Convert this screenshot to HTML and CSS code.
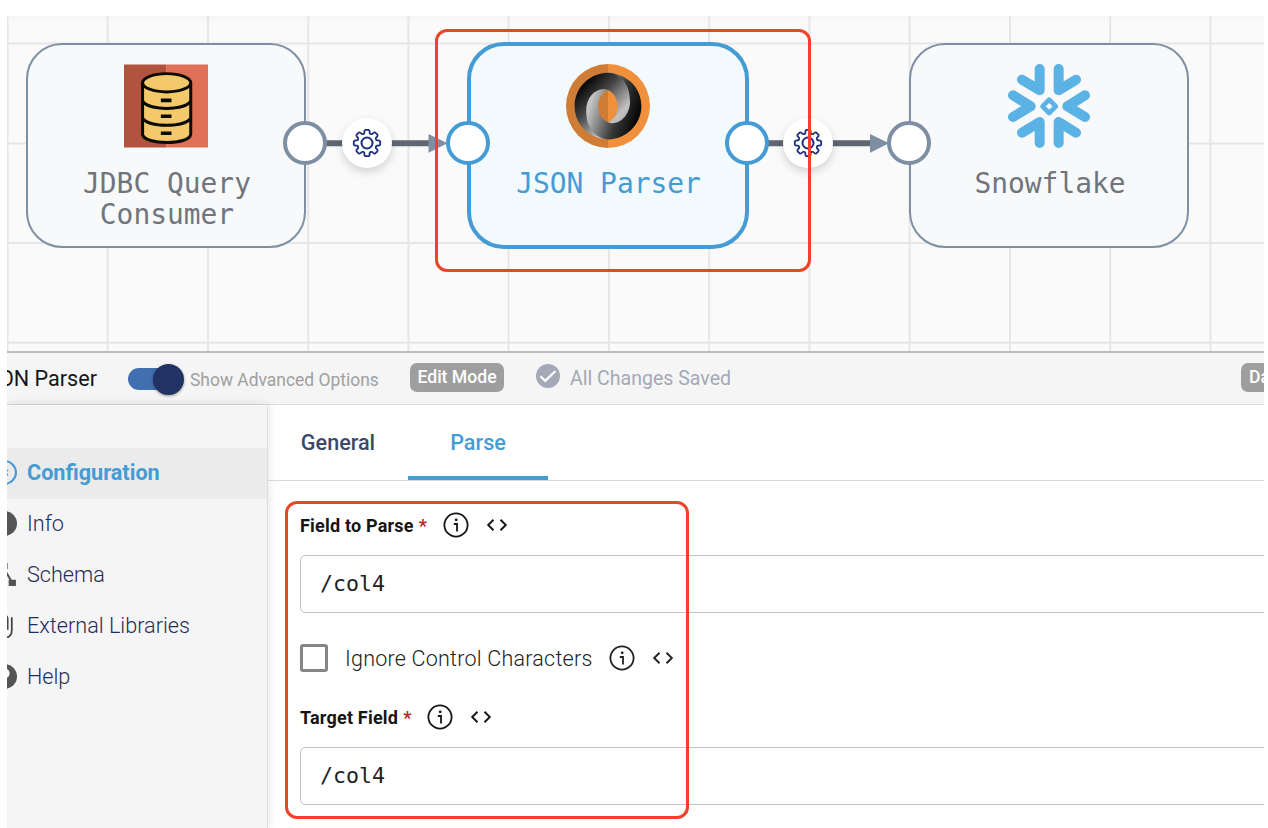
FILE: index.html
```html
<!DOCTYPE html>
<html lang="en">
<head>
<meta charset="utf-8">
<title>Pipeline - JSON Parser</title>
<link rel="stylesheet" href="styles.css">
</head>
<body>
<svg class="defs" width="0" height="0">
  <symbol id="gear" viewBox="-15 -15 30 30">
    <path d="M10.07-2.6 Q12.9-2.9 13.2-1.5 L13.2 1.5 Q12.9 2.9 10.07 2.6 A2 2 0 0 0 8.96 5.28 Q11.2 7.1 10.4 8.3 L8.3 10.4 Q7.1 11.2 5.28 8.96 A2 2 0 0 0 2.6 10.07 Q2.9 12.9 1.5 13.2 L-1.5 13.2 Q-2.9 12.9 -2.6 10.07 A2 2 0 0 0 -5.28 8.96 Q-7.1 11.2 -8.3 10.4 L-10.4 8.3 Q-11.2 7.1 -8.96 5.28 A2 2 0 0 0 -10.07 2.6 Q-12.9 2.9 -13.2 1.5 L-13.2-1.5 Q-12.9-2.9 -10.07-2.6 A2 2 0 0 0 -8.96-5.28 Q-11.2-7.1 -10.4-8.3 L-8.3-10.4 Q-7.1-11.2 -5.28-8.96 A2 2 0 0 0 -2.6-10.07 Q-2.9-12.9 -1.5-13.2 L1.5-13.2 Q2.9-12.9 2.6-10.07 A2 2 0 0 0 5.28-8.96 Q7.1-11.2 8.3-10.4 L10.4-8.3 Q11.2-7.1 8.96-5.28 A2 2 0 0 0 10.07-2.6Z" fill="none" stroke="currentColor" stroke-width="1.8" stroke-linejoin="round"/>
    <circle r="5.5" fill="none" stroke="currentColor" stroke-width="2"/>
  </symbol>
  <symbol id="info" viewBox="0 0 26 26">
    <circle cx="13" cy="13" r="11.6" fill="none" stroke="currentColor" stroke-width="1.8"/>
    <circle cx="13.2" cy="7.8" r="1.4" fill="currentColor"/>
    <path d="M10.8 12H14V19.5" fill="none" stroke="currentColor" stroke-width="1.8"/>
  </symbol>
  <symbol id="code" viewBox="0 0 22 14">
    <path d="M7.5 1.8 2.2 7l5.3 5.2M14.5 1.8 19.8 7l-5.3 5.2" fill="none" stroke="currentColor" stroke-width="1.9"/>
  </symbol>
</svg>
<div class="app">
  <section class="canvas">
    <svg class="wires" width="1257" height="336" viewBox="7 16 1257 336">
      <g stroke="#e6e6e6" stroke-width="2">
        <path d="M7.5 16V352M107.7 16V352M208 16V352M308.2 16V352M408.4 16V352M508.6 16V352M609 16V352M709.2 16V352M809.4 16V352M909.6 16V352M1010 16V352M1110.2 16V352M1210.5 16V352"/>
        <path d="M7 43.6H1264M7 143.4H1264M7 243H1264M7 342.7H1264"/>
      </g>
      <path d="M326 143.3H430M766 143.3H872" stroke="#5f6772" stroke-width="6"/>
      <path d="M428.5 134l19 9.3-19 9.5zM870 134l19 9.3-19 9.5z" fill="#7f8fa3"/>
    </svg>

    <div class="node node-jdbc">
      <svg class="logo" viewBox="373 191 253 250">
        <path fill="#b1533f" d="M373 191h127v250H373z"/><path fill="#de7056" d="M500 191h126v250H500z"/>
        <path d="M429 246V402C434 434 570 434 574 402V246" fill="#f4c96b" stroke="#0c0a05" stroke-width="9"/>
        <ellipse cx="501.500" cy="246" rx="72.500" ry="27.500" fill="#f4c96b" stroke="#0c0a05" stroke-width="9"/>
        <path d="M430 303C450 330 553 330 573 303M430 354C450 381 553 381 573 354" fill="none" stroke="#0c0a05" stroke-width="9"/>
        <path d="M484 299h32M484 347h32M484 398h32" stroke="#0c0a05" stroke-width="11"/>
      </svg>
      <div class="node-name">JDBC Query<br>Consumer</div>
    </div>
    <div class="node node-json">
      <svg class="logo" viewBox="0 0 84 84">
        <defs>
          <linearGradient id="j1" x1=".2" y1=".15" x2=".6" y2="1"><stop offset="0" stop-color="#111"/><stop offset=".1" stop-color="#1c1c1c"/><stop offset=".5" stop-color="#777"/><stop offset="1" stop-color="#ccc"/></linearGradient>
          <linearGradient id="j2" x1=".9" y1=".7" x2=".1" y2=".4"><stop offset="0" stop-color="#0a0a0a"/><stop offset=".4" stop-color="#383838"/><stop offset="1" stop-color="#c4c4c4"/></linearGradient>
          <linearGradient id="j3" x1=".2" y1=".1" x2=".85" y2=".75"><stop offset="0" stop-color="#050505"/><stop offset=".35" stop-color="#444"/><stop offset=".8" stop-color="#c2c2c2"/><stop offset="1" stop-color="#aaa"/></linearGradient>
        </defs>
        <path d="M42 0A42 42 0 0 0 42 84z" fill="#cf7c37"/><path d="M42 0A42 42 0 0 1 42 84z" fill="#f0903d"/>
        <g transform="translate(8.600 8.600) scale(.4175)">
          <path fill="url(#j3)" d="M79.865 119.1c35.398 48.255 70.04-13.469 69.989-50.587C149.793 24.627 105.312.1 79.836.1 38.943.1 0 33.895 0 80.135 0 131.531 44.64 160 79.836 160c-7.965-1.147-34.506-6.834-34.863-67.967-.24-41.346 13.488-57.866 34.805-50.6.477.177 23.514 9.265 23.514 38.95 0 29.56-23.427 38.716-23.427 38.716z"/>
          <path fill="url(#j2)" d="M79.823 41.4C56.433 33.34 27.78 52.618 27.78 91.23c0 63.048 46.721 68.77 52.384 68.77C121.057 160 160 126.204 160 79.964 160 28.568 115.36.1 80.164.1c9.748-1.35 52.541 10.55 52.541 69.037 0 38.141-31.953 58.905-52.735 50.033-.477-.178-23.514-9.265-23.514-38.95 0-29.56 23.367-38.82 23.367-38.82z"/>
        </g>
      </svg>
      <div class="node-name">JSON Parser</div>
    </div>
    <div class="node node-snow">
      <svg class="logo" viewBox="441 190 252 252">
        <g fill="none" stroke="#5bb2e4" stroke-width="30" stroke-linecap="round" stroke-linejoin="round">
          <path d="M539 205V269L486 237M596 205V269L648 237M539 427V364L486 396M596 427V364L648 396M459 284L512 317L459 349M675 284L622 317L675 349"/>
        </g>
        <path d="M567.500 297l20 20-20 20-20-20z" fill="none" stroke="#5bb2e4" stroke-width="14" stroke-linejoin="round"/>
      </svg>
      <div class="node-name">Snowflake</div>
    </div>

    <i class="port port-1"></i><i class="port port-2 active"></i><i class="port port-3 active"></i><i class="port port-4"></i>
    <span class="gear gear-1"><svg><use href="#gear"/></svg></span>
    <span class="gear gear-2"><svg><use href="#gear"/></svg></span>
    <div class="mark mark-node"></div>
  </section>

  <header class="bar">
    <div class="title"><span>JSON Parser</span></div>
    <span class="toggle"><i></i></span>
    <span class="toggle-label">Show Advanced Options</span>
    <span class="badge">Edit Mode</span>
    <svg class="saved-icon" viewBox="0 0 24 24"><circle cx="12" cy="12" r="12" fill="#a4a9b7"/><path d="M4.500 12.200l4.700 4.700L19.500 7" fill="none" stroke="#fff" stroke-width="2.200"/></svg>
    <span class="saved">All Changes Saved</span>
    <span class="badge badge-data">Data</span>
  </header>

  <div class="body">
    <nav class="side">
      <a class="item current"><svg viewBox="0 0 24 24" fill="none" stroke="currentColor" stroke-width="2"><circle cx="12" cy="12" r="11"/><path d="M12 10h3.500M12 14h3.500M8 8v8"/></svg><span>Configuration</span></a>
      <a class="item"><svg viewBox="0 0 24 24"><circle cx="12" cy="12" r="12" fill="#555"/><path d="M12 10v8M12 6v2" stroke="#fff" stroke-width="2"/></svg><span>Info</span></a>
      <a class="item"><svg viewBox="0 0 24 24" fill="#555"><path d="M16 17h7v6h-7zM1 17h7v6H1zM8 1h7v6H8z"/><path d="M13 9l6 10" stroke="#555" stroke-width="2"/></svg><span>Schema</span></a>
      <a class="item"><svg viewBox="0 0 24 24" fill="none" stroke="#444" stroke-width="1.700"><path d="M19 4V17a5.500 6.500 0 0 1-11 0V5a3.600 4 0 0 1 7 0V16"/></svg><span>External Libraries</span></a>
      <a class="item"><svg viewBox="0 0 24 24"><circle cx="12" cy="12" r="12" fill="#555"/><path d="M8.500 9a3.600 3.600 0 1 1 5.800 2.800Q12 13.500 12 15.500M12 17.500v2" fill="none" stroke="#fff" stroke-width="2.400"/></svg><span>Help</span></a>
    </nav>
    <main class="main">
      <div class="tabs"><a class="tab"><span>General</span></a><a class="tab selected"><span>Parse</span></a></div>
      <div class="form">
        <div class="label"><b>Field to Parse</b><em>*</em><svg class="i"><use href="#info"/></svg><svg class="c"><use href="#code"/></svg></div>
        <div class="input">/col4</div>
        <div class="check"><i class="box"></i><span>Ignore Control Characters</span><svg class="i"><use href="#info"/></svg><svg class="c"><use href="#code"/></svg></div>
        <div class="label target"><b>Target Field</b><em>*</em><svg class="i"><use href="#info"/></svg><svg class="c"><use href="#code"/></svg></div>
        <div class="input">/col4</div>
        <div class="mark mark-form"></div>
      </div>
    </main>
  </div>
</div>
</body>
</html>
```
FILE: styles.css
```css
* { box-sizing: border-box; }
body { margin: 0; background: #fff; font-family: Roboto, sans-serif; overflow: hidden; }
.defs { position: absolute; }
.app { width: 1257px; height: 812px; margin: 16px 0 0 7px; overflow: hidden; display: flex; flex-direction: column; }

.canvas { position: relative; height: 335px; flex: none; background: #fafafa; overflow: hidden; }
.canvas::before { content: ""; position: absolute; inset: 0 0 auto; height: 8px; background: linear-gradient(#f5f5f5, transparent); }
.wires { position: absolute; left: 0; top: 0; }
.node { position: absolute; top: 27px; width: 280px; height: 205px; border: 2px solid #8090a4; border-radius: 36px; background: #f7f9fb; display: flex; flex-direction: column; align-items: center; padding-top: 18.500px; color: #70757b; }
.node-jdbc { left: 19px; }
.node-json { left: 460px; top: 26px; width: 282px; height: 207px; border: 4px solid #459bd3; background: #f2fafe; color: #459bd3; padding-top: 17.500px; border-radius: 37px; }
.node-snow { left: 902px; }
.logo { width: 84px; height: 84px; flex: none; margin-right: 1px; }
.node-name { margin: 20px 0 0 2px; font: 27.9px/31px "DejaVu Sans Mono", monospace; text-align: center; white-space: nowrap; }
.node-json .node-name { margin-left: 1px; }
.port { position: absolute; top: 105px; width: 44px; height: 44px; border: 4px solid #7f8fa3; border-radius: 50%; background: #fff; }
.port.active { border-color: #459bd3; }
.port-1 { left: 276px; }
.port-2 { left: 439px; }
.port-3 { left: 717.500px; }
.port-4 { left: 880px; }
.gear { position: absolute; top: 102px; width: 50px; height: 50px; border-radius: 50%; background: #fff; box-shadow: 0 4px 10px rgba(0,0,0,.16); color: #1c307c; display: grid; place-items: center; }
.gear svg { width: 30px; height: 30px; margin: -1px 0 0 -1px; }
.gear-1 { left: 335px; }
.gear-2 { left: 776px; }
.mark { position: absolute; border: 3px solid #ee4328; border-radius: 12px; }
.mark-node { left: 428px; top: 13px; width: 376px; height: 243px; }
.mark-form { left: 17px; top: 20px; width: 404px; height: 318px; }

.bar { flex: none; height: 54px; border-top: 2px solid #bdbdbd; border-bottom: 1px solid #dcdcdc; background: #f5f5f5; display: flex; align-items: center; white-space: nowrap; }
.title { width: 90px; display: flex; justify-content: flex-end; font-size: 21.600px; color: #151515; margin-top: -1px; }
.toggle { width: 54px; height: 22px; margin: 1px 0 0 31px; border-radius: 11px; background: #426fb0; display: flex; justify-content: flex-end; align-items: center; }
.toggle i { width: 31px; height: 31px; flex: none; margin-right: -2px; border-radius: 50%; background: #213365; box-shadow: 0 1px 3px rgba(0,0,0,.4); }
.toggle-label { margin: 2px 0 0 8px; width: 189px; font-size: 17.450px; color: #a0a0a0; }
.badge { height: 29px; width: 94px; margin: -2px 0 0 31px; border-radius: 7px; background: #9e9e9e; color: #fff; font: 500 17.600px/29px Roboto, sans-serif; text-align: center; }
.saved-icon { width: 24px; height: 24px; margin: -5px 0 0 32px; }
.saved { margin: -1px 0 0 10px; width: 162px; font-size: 19.550px; color: #a4a9b7; }
.badge-data { margin-left: auto; margin-right: -34px; width: 57px; text-align: left; padding-left: 8px; }

.body { flex: 1; display: flex; min-height: 0; }
.side { width: 261px; flex: none; padding-top: 43px; background: #f5f5f5; border-right: 1px solid #dedede; box-shadow: 0 0 9px rgba(0,0,0,.13); }
.item { height: 51px; padding-bottom: 2px; display: flex; align-items: center; gap: 10px; font-size: 21.650px; font-weight: 300; color: #1f2d5c; white-space: nowrap; }
.item svg { width: 25px; height: 25px; margin-left: -15px; flex: none; }
.item.current { background: #ebebeb; color: #459bd3; font-weight: 700; }
.main { flex: 1; min-width: 0; }
.tabs { height: 76px; border-bottom: 1px solid #dcd8d8; display: flex; }
.tab { width: 140px; height: 75px; display: grid; place-items: center; font-size: 21.600px; font-weight: 500; color: #3b4a68; }
.tab.selected { color: #459bd3; border-bottom: 4px solid #459bd3; padding-top: 4px; }
.form { position: relative; padding: 29px 0 0 32px; }
.label { height: 30px; display: flex; align-items: center; font-size: 18px; letter-spacing: .2px; color: #151515; white-space: nowrap; }
.label em { color: #b02a25; font-style: normal; font-weight: 700; margin-left: 5px; width: 8px; }
.i { width: 26px; height: 26px; margin-left: 16px; flex: none; }
.c { width: 22px; height: 14px; margin-left: 17px; flex: none; }
.input { height: 58px; margin: 15px -10px 0 0; border: 1.500px solid #c2c2c2; border-radius: 5px; padding-left: 19px; font: 21.600px/56px "DejaVu Sans Mono", monospace; color: #222; }
.check { height: 30px; margin-top: 30px; display: flex; align-items: center; font-size: 21.500px; letter-spacing: .23px; color: #222; white-space: nowrap; font-weight: 300; }
.box { width: 28px; height: 28px; border: 3px solid #858585; border-radius: 3px; margin-right: 17px; }
.target { margin-top: 29px; }
```
